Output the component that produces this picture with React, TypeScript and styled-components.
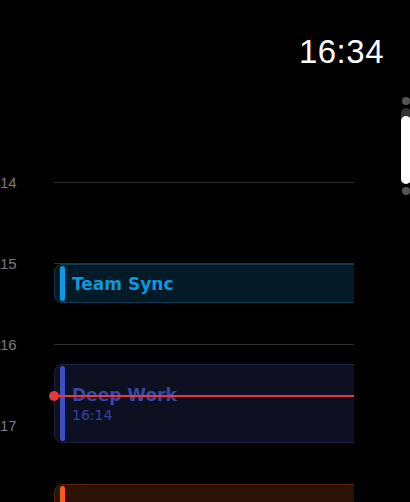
import styled, { createGlobalStyle } from "styled-components";

const HOUR = 81;

const GlobalStyle = createGlobalStyle`
  html, body {
    margin: 0;
    padding: 0;
    background: #000;
    overflow: hidden;
  }
  body {
    font-family: "Liberation Sans", Arial, sans-serif;
  }
`;

type Tone = "blue" | "indigo" | "orange";

const tones: Record<Tone, { bg: string; border: string; bar: string; text: string; sub: string }> = {
  blue: { bg: "#021b27", border: "#0b3a52", bar: "#0a9be6", text: "#0d97dd", sub: "#0d97dd" },
  indigo: { bg: "#0d1021", border: "#1c2142", bar: "#3c4fc4", text: "#3747a6", sub: "#34439a" },
  orange: { bg: "#2c1107", border: "#5a230d", bar: "#ff5a1e", text: "#ff5a1e", sub: "#ff5a1e" },
};

// the last event starts at the bottom edge, its text is below the fold
const events: { title?: string; time?: string; start: number; end: number; tone: Tone }[] = [
  { title: "Team Sync", start: 15, end: 15.5, tone: "blue" },
  { title: "Deep Work", time: "16:14", start: 16.23, end: 17.23, tone: "indigo" },
  { start: 17.72, end: 18.5, tone: "orange" },
];

const hours = [14, 15, 16, 17];
const FIRST = 14;
const NOW = 16 + 38.5 / 60;

export default function App() {
  return (
    <>
      <GlobalStyle />
      <Screen>
        <Header>
          <Clock>16:34</Clock>
        </Header>
        <Timeline>
          {hours.map((h) => (
            <HourRow key={h}>
              <HourLabel>{h}</HourLabel>
              <HourLine />
            </HourRow>
          ))}
          <EventLayer>
            {events.map((e, i) => {
              const t = tones[e.tone];
              return (
                <EventCard
                  key={i}
                  $bg={t.bg}
                  $border={t.border}
                  style={{ top: (e.start - FIRST) * HOUR + 1, height: (e.end - e.start) * HOUR - 2 }}
                >
                  <EventBar $color={t.bar} />
                  {e.title && (
                    <EventBody>
                      <EventTitle $color={t.text}>{e.title}</EventTitle>
                      {e.time && <EventTime $color={t.sub}>{e.time}</EventTime>}
                    </EventBody>
                  )}
                </EventCard>
              );
            })}
          </EventLayer>
          <NowLine style={{ top: (NOW - FIRST) * HOUR - 1 }}>
            <NowDot />
          </NowLine>
        </Timeline>
        <Scroller>
          <ScrollDot />
          <ScrollTrack>
            <ScrollThumb />
          </ScrollTrack>
          <ScrollDot />
        </Scroller>
      </Screen>
    </>
  );
}

const Screen = styled.div`
  position: relative;
  width: 410px;
  height: 502px;
  overflow: hidden;
  background: #000;
`;

const Header = styled.header`
  height: 182px;
  box-sizing: border-box;
  padding: 34px 26px 0 0;
  display: flex;
  justify-content: flex-end;
  align-items: flex-start;
`;

const Clock = styled.div`
  color: #fff;
  font-size: 33px;
  line-height: 36px;
  letter-spacing: 0.5px;
`;

const Timeline = styled.div`
  position: relative;
  width: 354px;
  height: ${HOUR * 4}px;
`;

const HourRow = styled.div`
  display: grid;
  grid-template-columns: 54px 300px;
  height: ${HOUR}px;
`;

const HourLabel = styled.div`
  color: #7a7a7a;
  font-size: 15px;
  line-height: 18px;
  margin-top: -8px;
`;

const HourLine = styled.div`
  border-top: 1px solid #2e2e2e;
`;

const EventLayer = styled.div`
  position: absolute;
  top: 0;
  left: 54px;
  width: 300px;
  height: 400px;
  overflow: hidden;
`;

const EventCard = styled.div<{ $bg: string; $border: string }>`
  position: absolute;
  left: 0;
  width: 330px;
  box-sizing: border-box;
  display: flex;
  align-items: stretch;
  background: ${(p) => p.$bg};
  border: 1px solid ${(p) => p.$border};
  border-radius: 8px;
  padding: 1px 0 1px 5px;
`;

const EventBar = styled.div<{ $color: string }>`
  width: 5px;
  flex: none;
  border-radius: 3px;
  background: ${(p) => p.$color};
`;

const EventBody = styled.div`
  display: flex;
  flex-direction: column;
  justify-content: center;
  gap: 2px;
  padding: 2px 0 0 7px;
  font-family: "DejaVu Sans", Verdana, sans-serif;
`;

const EventTitle = styled.div<{ $color: string }>`
  color: ${(p) => p.$color};
  font-size: 17px;
  font-weight: 700;
  line-height: 20px;
`;

const EventTime = styled.div<{ $color: string }>`
  color: ${(p) => p.$color};
  font-size: 14px;
  line-height: 17px;
`;

const NowLine = styled.div`
  position: absolute;
  left: 54px;
  width: 300px;
  height: 2px;
  background: #e5383f;
`;

const NowDot = styled.div`
  position: absolute;
  left: -5px;
  top: -4px;
  width: 10px;
  height: 10px;
  border-radius: 50%;
  background: #e5383f;
`;

const Scroller = styled.div`
  position: absolute;
  top: 97px;
  left: 401px;
  width: 10px;
  display: flex;
  flex-direction: column;
  align-items: center;
  gap: 3px;
`;

const ScrollDot = styled.div`
  width: 8px;
  height: 8px;
  border-radius: 50%;
  background: #555;
`;

const ScrollTrack = styled.div`
  width: 10px;
  height: 76px;
  border-radius: 5px;
  background: #333;
  display: flex;
  flex-direction: column;
  justify-content: flex-end;
`;

const ScrollThumb = styled.div`
  height: 68px;
  border-radius: 5px;
  background: #fff;
`;
